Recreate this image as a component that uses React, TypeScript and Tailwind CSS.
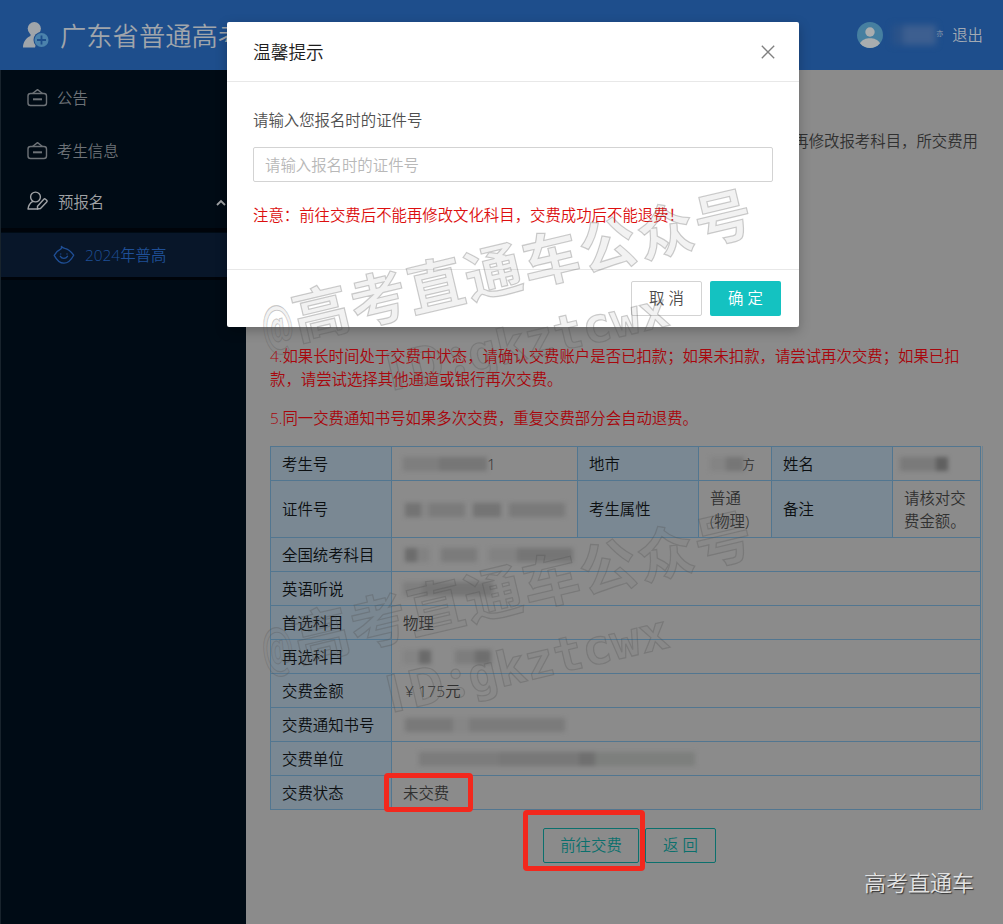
import React from 'react';
import { clsx } from 'clsx';

interface BlurPart {
  w: string;
  tone: string;
}

interface IconProps {
  className?: string;
}

const BoardIcon: React.FC<IconProps> = ({ className }) => (
  <svg viewBox="0 0 22 20" fill="none" stroke="currentColor" strokeWidth="1.4" className={className}>
    <rect x="2" y="5.5" width="18.500" height="12" rx="2.5" />
    <path d="M6.500 5.500 11.500 1.600l5 3.900" strokeLinejoin="round" />
    <path d="M7 11.300h9" strokeWidth="2" />
  </svg>
);

const UserEditIcon: React.FC<IconProps> = ({ className }) => (
  <svg viewBox="0 0 22 20" fill="none" stroke="currentColor" strokeWidth="1.4" strokeLinejoin="round" className={className}>
    <circle cx="9.5" cy="6" r="4.900" />
    <path d="M6.800 10.300C4 12 2.300 14.600 2 18h9.500" strokeLinecap="round" />
    <path d="M11.500 15.200 17.800 8.200c.5-.5 1.200-.5 1.700 0l1.200 1.100c.5.500.5 1.100 0 1.600L14.500 17.500l-3 .5z" />
  </svg>
);

const FaceIcon: React.FC<IconProps> = ({ className }) => (
  <svg viewBox="0 0 22 20" fill="none" stroke="currentColor" strokeWidth="1.3" strokeLinejoin="round" className={className}>
    <path d="M8.400 1.400c.8 1.200 2 1.700 3.400 2 3.200.5 6.300 3.200 8.900 6.800-2.600 4.800-5.700 8-9.800 8S3.700 15.200 1.200 10.400C3.100 7.200 5 5.300 7.600 4.200 8.500 3.600 8.700 2.500 8.400 1.400z" />
    <path d="M7.300 11.300c1.800 2.700 5.400 2.700 7.200 0" strokeLinecap="round" />
    <path d="M7.700 8.500v.9M14 8.500v.9" />
  </svg>
);

const LogoIcon = () => (
  <svg viewBox="0 0 28 28" className="h-7 w-7">
    <circle cx="12.300" cy="7.600" r="6.600" fill="#a0a5aa" />
    <path d="M8.500 12h8v3l-3.500 11.500H1C1 21 4 17 8.500 15z" fill="#a0a5aa" />
    <circle cx="19.500" cy="19" r="8" fill="#1e4e8c" />
    <circle cx="19.500" cy="19" r="7" fill="#4b82ac" />
    <path d="M19.500 14.500v9M15 19h9" stroke="#1e4e8c" strokeWidth="1.800" />
  </svg>
);

const Avatar = () => (
  <svg viewBox="0 0 26 26" className="h-[26px] w-[26px]">
    <circle cx="13" cy="13" r="13" fill="#467fa0" />
    <circle cx="13" cy="10" r="4.700" fill="#a9adaf" />
    <path d="M3 21.300C5 17.500 9 16.200 13 16.200s8 1.300 10 5.100A13 13 0 0 1 3 21.300z" fill="#a9adaf" />
  </svg>
);

// Censored value: a row of smeared blocks
const Redacted: React.FC<{ parts: BlurPart[]; className?: string }> = ({ parts, className }) => (
  <span className={clsx('flex h-3.5 blur-[2px]', className)}>
    {parts.map((p, i) => (
      <span key={i} className={clsx('h-full', p.w, p.tone)} />
    ))}
  </span>
);

const Header = () => (
  <header className="flex h-[70px] shrink-0 items-center justify-between bg-[#1e4e8c] pr-5 pl-[22px]">
    <div className="flex items-center gap-[10px] text-[26.300px] text-[#a0a5ab]">
      <LogoIcon />
      <span className="pt-[3px]">广东省普通高考</span>
    </div>
    <div className="flex items-center text-[15.400px] text-[#a3aab3]">
      <Avatar />
      <span className="ml-[9px] flex h-5 w-11 blur-[3px]">
        <span className="w-1/4 bg-[#2a5289]" />
        <span className="grow bg-[#3d5f90]" />
      </span>
      <span className="mb-1 text-[7px] leading-none">亦</span>
      <span className="pt-0.5 pl-[9px]">退出</span>
    </div>
  </header>
);

const Sidebar = () => (
  <nav className="w-[246px] shrink-0 border-l border-[#18232c] bg-[#000b15] pt-px text-[15.400px] text-[#6d7277]">
    <div className="flex h-[53px] items-center gap-[9px] pt-0.5 pl-[25px]">
      <BoardIcon className="-mt-0.5 h-5 w-[22px]" />
      <span>公告</span>
    </div>
    <div className="flex h-[52px] items-center gap-[9px] pt-[3px] pl-[25px]">
      <BoardIcon className="-mt-0.5 h-5 w-[22px]" />
      <span>考生信息</span>
    </div>
    <div className="flex h-[52px] items-center gap-[9px] pt-0.5 pl-[25px] text-[#a0a3a6]">
      <UserEditIcon className="-mt-1 h-5 w-[22px]" />
      <span className="pl-px">预报名</span>
      <svg viewBox="0 0 10 8" fill="none" stroke="currentColor" strokeWidth="1.800" className="mr-5 ml-auto h-2 w-2.5">
        <path d="M1 6l4-4 4 4" />
      </svg>
    </div>
    <div className="h-1 bg-[#00040a]" />
    <div className="mt-px flex h-[44px] items-center gap-[10px] bg-[#081629] pt-0.5 pl-[52px] text-[#1f4f96]">
      <FaceIcon className="-mt-0.5 h-5 w-[22px]" />
      <span>2024年普高</span>
    </div>
    <div className="h-[3px] bg-[#00040a]" />
  </nav>
);

const simpleRows: { label: string; value: React.ReactNode }[] = [
  {
    label: '全国统考科目',
    value: (
      <Redacted
        className="ml-0.5"
        parts={[
          { w: 'w-3', tone: 'bg-[#6c6c6c]' },
          { w: 'w-3', tone: 'bg-[#828282]' },
          { w: 'w-3', tone: 'bg-transparent' },
          { w: 'w-9', tone: 'bg-[#7b7b7b]' },
          { w: 'w-3', tone: 'bg-transparent' },
          { w: 'w-7', tone: 'bg-[#828282]' },
          { w: 'w-14', tone: 'bg-[#757575]' },
        ]}
      />
    ),
  },
  {
    label: '英语听说',
    value: (
      <Redacted
        parts={[
          { w: 'w-5', tone: 'bg-[#7e7e7e]' },
          { w: 'w-[70px]', tone: 'bg-[#747474]' },
        ]}
      />
    ),
  },
  { label: '首选科目', value: '物理' },
  {
    label: '再选科目',
    value: (
      <Redacted
        parts={[
          { w: 'w-4', tone: 'bg-[#848484]' },
          { w: 'w-3', tone: 'bg-[#6a6a6a]' },
          { w: 'w-6', tone: 'bg-transparent' },
          { w: 'w-5', tone: 'bg-[#7d7d7d]' },
          { w: 'w-4', tone: 'bg-[#6e6e6e]' },
        ]}
      />
    ),
  },
  { label: '交费金额', value: <span className="pl-0.5 tracking-[0.200px]">¥ 175元</span> },
  {
    label: '交费通知书号',
    value: (
      <Redacted
        className="ml-0.5"
        parts={[
          { w: 'w-12', tone: 'bg-[#797979]' },
          { w: 'w-4', tone: 'bg-[#868686]' },
          { w: 'w-24', tone: 'bg-[#7b7b7b]' },
        ]}
      />
    ),
  },
  {
    label: '交费单位',
    value: (
      <Redacted
        className="ml-4"
        parts={[
          { w: 'w-20', tone: 'bg-[#7c7c7c]' },
          { w: 'w-20', tone: 'bg-[#787878]' },
          { w: 'w-4', tone: 'bg-[#6f6f6f]' },
          { w: 'w-[100px]', tone: 'bg-[#7d7f7d]' },
        ]}
      />
    ),
  },
  {
    label: '交费状态',
    value: (
      <>
        未交费
        <span className="absolute -top-[3px] -left-2 h-[39px] w-[89px] rounded-sm border-[5px] border-[#f3281d]" />
      </>
    ),
  },
];

const th = 'border border-[#527690] bg-[#7a8893] px-[11px] pt-px text-left font-[350] text-[#0c0f11]';
const td = 'relative border border-[#527690] px-[11px] pt-px text-[#303030]';

const InfoTable = () => (
  <div className="w-[713px] border-r border-[#6b8393]">
    <table className="w-[711px] table-fixed border-collapse leading-[23px]">
      <colgroup>
        <col className="w-[121px]" />
        <col className="w-[186px]" />
        <col className="w-[121px]" />
        <col className="w-[73px]" />
        <col className="w-[121px]" />
        <col className="w-[88px]" />
      </colgroup>
      <tbody>
        <tr className="h-[34px]">
          <th className={th}>考生号</th>
          <td className={td}>
            <div className="flex items-center">
              <Redacted
                parts={[
                  { w: 'w-9', tone: 'bg-[#7e7e7e]' },
                  { w: 'w-12', tone: 'bg-[#767676]' },
                ]}
              />
              1
            </div>
          </td>
          <th className={th}>地市</th>
          <td className={td}>
            <div className="flex items-center">
              <Redacted
                parts={[
                  { w: 'w-4', tone: 'bg-[#848484]' },
                  { w: 'w-[18px]', tone: 'bg-[#767676]' },
                ]}
              />
              <span className="-ml-0.5 text-[13px]">方</span>
            </div>
          </td>
          <th className={th}>姓名</th>
          <td className={td}>
            <Redacted
              className="-ml-1"
              parts={[
                { w: 'w-9', tone: 'bg-[#7a7a7a]' },
                { w: 'w-3', tone: 'bg-[#606060]' },
              ]}
            />
          </td>
        </tr>
        <tr className="h-[57px]">
          <th className={th}>证件号</th>
          <td className={td}>
            <Redacted
              className="ml-0.5"
              parts={[
                { w: 'w-4', tone: 'bg-[#737373]' },
                { w: 'w-2', tone: 'bg-[#868686]' },
                { w: 'w-9', tone: 'bg-[#7b7b7b]' },
                { w: 'w-2', tone: 'bg-transparent' },
                { w: 'w-7', tone: 'bg-[#747474]' },
                { w: 'w-2', tone: 'bg-transparent' },
                { w: 'w-14', tone: 'bg-[#7a7a7a]' },
              ]}
            />
          </td>
          <th className={th}>考生属性</th>
          <td className={td}>
            普通
            <br />
            (物理)
          </td>
          <th className={th}>备注</th>
          <td className={td}>请核对交费金额。</td>
        </tr>
        {simpleRows.map((row) => (
          <tr key={row.label} className="h-[34px]">
            <th className={th}>{row.label}</th>
            <td className={td} colSpan={5}>
              {row.value}
            </td>
          </tr>
        ))}
      </tbody>
    </table>
  </div>
);

const Modal = () => (
  <div className="absolute top-[22px] left-[227px] flex h-[305px] w-[572px] flex-col rounded-[2px] bg-white shadow-[0_4px_12px_rgba(0,0,0,0.25)]">
    <div className="flex h-[60px] shrink-0 items-center justify-between border-b border-[#e8e8e8] pr-6 pl-[26px]">
      <h2 className="pt-0.5 text-[17.700px] text-[#1c1c1c]">温馨提示</h2>
      <svg viewBox="0 0 14 14" stroke="#808080" strokeWidth="1.300" className="mt-px h-3.5 w-3.5">
        <path d="M.8.8l12.400 12.400M13.200.8L.8 13.200" />
      </svg>
    </div>
    <div className="grow px-[26px] pt-[27px] text-[15.400px] leading-[23px]">
      <p className="text-[#505050]">请输入您报名时的证件号</p>
      <input
        className="mt-[15px] block h-[35px] w-[520px] rounded-[2px] border border-[#d3d3d3] px-[11px] pt-0.5 outline-none placeholder:text-[#b8b8b8]"
        placeholder="请输入报名时的证件号"
      />
      <p className="mt-[22px] text-[#dc0f0f]">注意：前往交费后不能再修改文化科目，交费成功后不能退费！</p>
    </div>
    <div className="flex h-[58px] shrink-0 justify-end gap-2 border-t border-[#e8e8e8] pt-[11px] pr-[18px] text-[15.400px]">
      <button className="h-[35px] w-[71px] rounded-[2px] border border-[#d3d3d3] text-[#4c4c4c]">取 消</button>
      <button className="h-[35px] w-[71px] rounded-[2px] bg-[#14c2c1] text-white">确 定</button>
    </div>
  </div>
);

const Watermark = () => (
  <svg
    viewBox="0 0 1003 924"
    className="pointer-events-none absolute inset-0 h-full w-full font-['Noto_Sans_CJK_SC',sans-serif] font-bold"
    fill="rgba(125,125,125,0.1)"
    stroke="rgba(80,80,80,0.28)"
    strokeWidth="1.200"
  >
    {[0, 322].map((dy) => (
      <g key={dy} transform={`translate(0 ${dy})`}>
        <text
          transform="translate(266 348) rotate(-13.300)"
          fontSize="52"
          textLength="32"
          lengthAdjust="spacingAndGlyphs"
        >
          @
        </text>
        <text transform="translate(298 340) rotate(-13.300)" fontSize="57" textLength="470">
          高考直通车公众号
        </text>
        <text transform="translate(391 391) rotate(-13.300)" fontSize="50" textLength="80">
          ID:
        </text>
        <text
          transform="translate(472 372) rotate(-13.300)"
          fontSize="48"
          textLength="205"
          className="font-['DejaVu_Sans_Mono',monospace]"
        >
          gkztcwx
        </text>
      </g>
    ))}
  </svg>
);

export default function App() {
  return (
    <div className="relative flex h-[924px] w-[1003px] flex-col overflow-hidden bg-[#8b8b8b] font-['Open_Sans','Noto_Sans_CJK_SC',sans-serif] font-[350]">
      <Header />
      <div className="flex min-h-0 grow">
        <Sidebar />
        <main className="w-[757px] pt-[60px] pr-[22px] pl-6 text-[15.400px] leading-[23px]">
          <p className="pr-[3px] text-right text-[#303030]">再修改报考科目，所交费用</p>
          <div className="mt-[192px] w-[700px] text-[#a8060c]">
            <p>
              4.如果长时间处于交费中状态，请确认交费账户是否已扣款；如果未扣款，请尝试再次交费；如果已扣款，请尝试选择其他通道或银行再次交费。
            </p>
            <p className="mt-4 mb-4">5.同一交费通知书号如果多次交费，重复交费部分会自动退费。</p>
          </div>
          <InfoTable />
          <div className="mt-[18px] flex gap-1.5 pl-[273px] text-[#0b706d]">
            <div className="relative">
              <button className="h-[35px] w-24 rounded-[2px] border border-[#0b706d]">前往交费</button>
              <span className="absolute -top-[18px] -left-5 h-[61px] w-[122px] rounded-sm border-[5px] border-[#f3281d]" />
            </div>
            <button className="h-[35px] w-[71px] rounded-[2px] border border-[#0b706d]">返 回</button>
          </div>
        </main>
      </div>
      <Modal />
      <Watermark />
      <span className="absolute right-[29px] bottom-[26px] text-[22px] leading-8 font-[350] text-[#e2e2e2] [text-shadow:1px_1px_1px_#333]">
        高考直通车
      </span>
    </div>
  );
}
